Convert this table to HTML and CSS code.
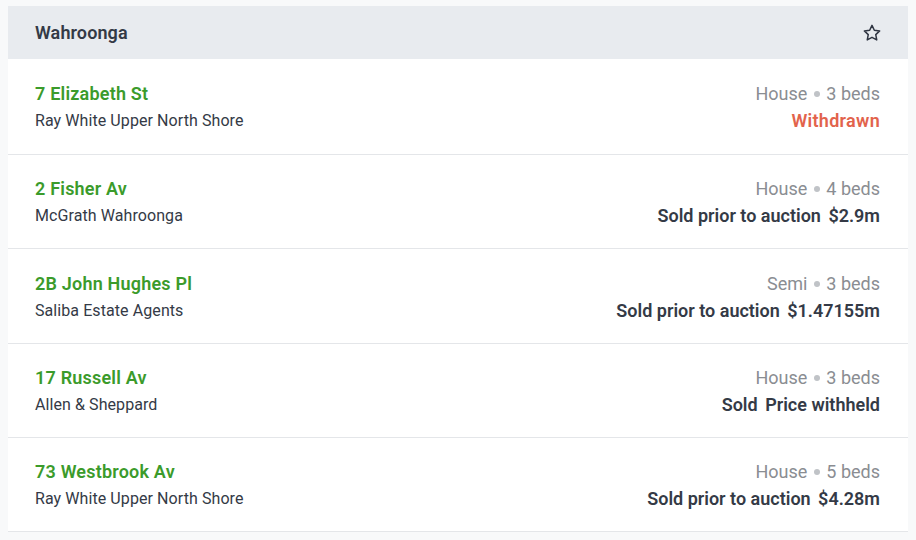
FILE: index.html
```html
<!DOCTYPE html>
<html>
<head>
<meta charset="utf-8">
<link rel="stylesheet" href="styles.css">
</head>
<body>
<div class="card">
  <div class="header">
    <span class="suburb">Wahroonga</span>
    <svg class="star" width="20" height="20" viewBox="0 0 24 24" fill="none" stroke="#2f3542" stroke-width="1.8" stroke-linejoin="round"><path d="M12 2.8l2.8 5.9 6.4.8-4.7 4.4 1.2 6.4L12 17.2l-5.7 3.1 1.2-6.4-4.7-4.4 6.4-.8z"/></svg>
  </div>
  <div class="row">
    <div class="left"><div class="addr">7 Elizabeth St</div><div class="agent">Ray White Upper North Shore</div></div>
    <div class="right"><div class="meta">House <span class="dot"></span> 3 beds</div><div class="status withdrawn">Withdrawn</div></div>
  </div>
  <div class="row">
    <div class="left"><div class="addr">2 Fisher Av</div><div class="agent">McGrath Wahroonga</div></div>
    <div class="right"><div class="meta">House <span class="dot"></span> 4 beds</div><div class="status">Sold prior to auction <span class="price">$2.9m</span></div></div>
  </div>
  <div class="row">
    <div class="left"><div class="addr">2B John Hughes Pl</div><div class="agent">Saliba Estate Agents</div></div>
    <div class="right"><div class="meta">Semi <span class="dot"></span> 3 beds</div><div class="status">Sold prior to auction <span class="price">$1.47155m</span></div></div>
  </div>
  <div class="row">
    <div class="left"><div class="addr">17 Russell Av</div><div class="agent">Allen &amp; Sheppard</div></div>
    <div class="right"><div class="meta">House <span class="dot"></span> 3 beds</div><div class="status">Sold <span class="price">Price withheld</span></div></div>
  </div>
  <div class="row">
    <div class="left"><div class="addr">73 Westbrook Av</div><div class="agent">Ray White Upper North Shore</div></div>
    <div class="right"><div class="meta">House <span class="dot"></span> 5 beds</div><div class="status">Sold prior to auction <span class="price">$4.28m</span></div></div>
  </div>
</div>
</body>
</html>
```

FILE: styles.css
```css
html, body {
  margin: 0;
  padding: 0;
  background: #f8f9fa;
  font-family: Roboto, "Liberation Sans", sans-serif;
}
.card {
  margin: 6px 8px 0 8px;
  background: #ffffff;
}
.header {
  height: 53px;
  background: #e8ebef;
  display: flex;
  align-items: center;
  justify-content: space-between;
  padding: 0 27px;
}
.suburb {
  font-size: 18px;
  font-weight: 600;
  color: #343a46;
  letter-spacing: 0.1px;
}
.star {
  display: block;
  margin-right: -1px;
}
.row {
  height: 95px;
  box-sizing: border-box;
  border-top: 1px solid #e4e6e9;
  display: flex;
  align-items: center;
  justify-content: space-between;
  padding: 2px 28px 0 27px;
}
.header + .row { border-top: none; }
.row:nth-child(3), .row:nth-child(5) { height: 94px; }
.row:last-child { border-bottom: 1px solid #e4e6e9; }
.left, .right {
  display: flex;
  flex-direction: column;
  gap: 3px;
}
.right { align-items: flex-end; }
.addr {
  font-size: 18px;
  font-weight: 600;
  color: #3b9b2b;
  line-height: 24px;
  letter-spacing: 0.2px;
}
.agent {
  font-size: 16px;
  color: #343a46;
  line-height: 24px;
  letter-spacing: 0.08px;
}
.meta {
  font-size: 18px;
  color: #8a8d92;
  line-height: 24px;
}
.dot {
  display: inline-block;
  width: 6px;
  height: 6px;
  border-radius: 50%;
  background: #c0c3c7;
  margin: 0 2px;
  vertical-align: 3px;
}
.status {
  font-size: 18px;
  font-weight: 600;
  color: #343a46;
  line-height: 24px;
}
.price { margin-left: 3px; }
.withdrawn { color: #e2634c; letter-spacing: 0.3px; }
```
